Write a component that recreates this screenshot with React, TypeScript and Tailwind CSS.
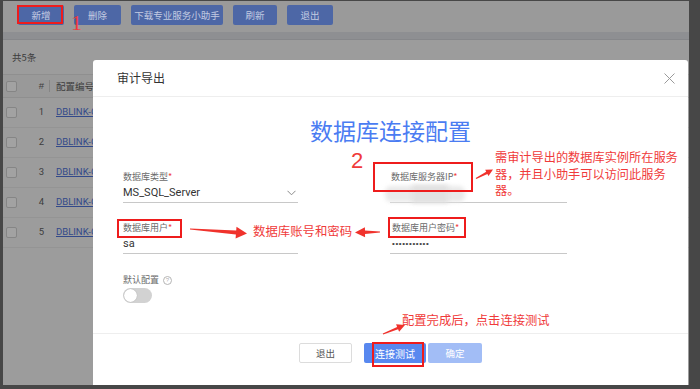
import React from "react";

function arrowPts(x1: number, y1: number, x2: number, y2: number, hl: number, hw: number, sw: number) {
  const dx = x2 - x1;
  const dy = y2 - y1;
  const len = Math.hypot(dx, dy);
  const ux = dx / len;
  const uy = dy / len;
  const nx = -uy;
  const ny = ux;
  const bx = x2 - ux * hl;
  const by = y2 - uy * hl;
  const p = (x: number, y: number) => `${x.toFixed(1)},${y.toFixed(1)}`;
  return [
    p(x1 + nx * 0.6, y1 + ny * 0.6),
    p(bx + (nx * sw) / 2, by + (ny * sw) / 2),
    p(bx + (nx * hw) / 2, by + (ny * hw) / 2),
    p(x2, y2),
    p(bx - (nx * hw) / 2, by - (ny * hw) / 2),
    p(bx - (nx * sw) / 2, by - (ny * sw) / 2),
    p(x1 - nx * 0.6, y1 - ny * 0.6),
  ].join(" ");
}

const RED = "#f0322c";

export default function App() {
  const rows = [1, 2, 3, 4, 5];
  return (
    <div lang="zh-CN" className="w-[700px] h-[389px] bg-[#474747] pt-[1px] pl-[3px] pr-[11px] pb-[4px] overflow-hidden font-['Liberation_Sans','Noto_Sans_CJK_SC',sans-serif]">
      <div className="relative w-full h-full bg-[#9c9c9c] overflow-hidden">
        {/* toolbar */}
        <div className="h-[31px] flex items-start pt-[4px] pl-[15px] gap-[10px] bg-[#9a9a9a]">
          {[
            ["新增", "w-[46px]"],
            ["删除", "w-[47px]"],
            ["下载专业服务小助手", "w-[92px]"],
            ["刷新", "w-[44px]"],
            ["退出", "w-[46px]"],
          ].map(([t, w]) => (
            <div
              key={t}
              className={`${w} h-[20px] rounded-[2px] bg-[#4d67a6] text-[#c3cbe2] text-[9.5px] flex items-center justify-center font-['Noto_Sans_CJK_SC',sans-serif]`}
            >
              {t}
            </div>
          ))}
        </div>
        <div className="h-[8px] bg-[#8e8f92] border-b border-[#86878a]" />
        {/* content */}
        <div className="h-[34px] flex items-center pl-[9px] text-[9.5px] text-[#3d3d3d] font-['Noto_Sans_CJK_SC',sans-serif]">
          共5条
        </div>
        <div className="border-t border-[#8f8f8f]">
          <div className="h-[23px] flex items-center border-b border-[#8f8f8f] bg-[#999999] text-[9.5px] text-[#3d3d3d]">
            <div className="w-[31px] flex items-center pl-[3px]">
              <div className="w-[11px] h-[11px] rounded-[2px] border border-[#858585] bg-[#a2a2a2]" />
            </div>
            <div className="w-[15px] text-center">#</div>
            <div className="w-[1px] h-[12px] bg-[#858585] mr-[6px]" />
            <div className="font-['Noto_Sans_CJK_SC',sans-serif]">配置编号</div>
          </div>
          {rows.map((r) => (
            <div key={r} className="h-[30px] flex items-center border-b border-[#949494] text-[9.5px] text-[#3d3d3d]">
              <div className="w-[31px] flex items-center pl-[3px]">
                <div className="w-[11px] h-[11px] rounded-[2px] border border-[#858585] bg-[#a2a2a2]" />
              </div>
              <div className="w-[15px] text-center font-['Roboto',sans-serif]">{r}</div>
              <div className="w-[7px]" />
              <div className="text-[#33498a] underline font-['Roboto',sans-serif]">DBLINK-CONFIG-00{r}</div>
            </div>
          ))}
        </div>

        {/* modal */}
        <div className="absolute left-[90px] top-[59px] w-[595px] h-[340px] bg-white rounded-t-[3px] flex flex-col">
          <div className="h-[37px] shrink-0 flex items-center justify-between pl-[24px] pr-[13px] border-b border-[#eeeeee]">
            <div className="text-[12px] text-[#333333] font-['Noto_Sans_CJK_SC',sans-serif]">审计导出</div>
            <svg width="11" height="11" viewBox="0 0 11 11">
              <path d="M0.5 0.5 L10.5 10.5 M10.5 0.5 L0.5 10.5" stroke="#9a9a9a" strokeWidth="1" />
            </svg>
          </div>
          <div className="h-[237px] shrink-0 border-b border-[#eeeeee]">
            <div className="mt-[18px] h-[30px] leading-[30px] text-center text-[23px] text-[#4a7cf2] font-['Noto_Sans_CJK_SC',sans-serif]">
              数据库连接配置
            </div>
            <div className="mt-[25px] flex pl-[30px] gap-[92px]">
              {/* left column */}
              <div className="w-[175px] flex flex-col gap-[18px]">
                <div>
                  <div className="h-[14px] leading-[14px] text-[9px] text-[#6a6a6a] font-['Noto_Sans_CJK_SC',sans-serif]">
                    数据库类型<span className="text-[#f04040]">*</span>
                  </div>
                  <div className="h-[19px] flex items-center justify-between border-b border-[#c8c8c8] text-[11px] text-[#333333] font-['Roboto',sans-serif]">
                    <span>MS_SQL_Server</span>
                    <svg width="9" height="6" viewBox="0 0 9 6" className="mr-[2px]">
                      <path d="M0.5 0.8 L4.5 4.8 L8.5 0.8" fill="none" stroke="#8a8a8a" strokeWidth="1" />
                    </svg>
                  </div>
                </div>
                <div>
                  <div className="h-[14px] leading-[14px] text-[9px] text-[#6a6a6a] font-['Noto_Sans_CJK_SC',sans-serif]">
                    数据库用户<span className="text-[#f04040]">*</span>
                  </div>
                  <div className="h-[19px] flex items-center border-b border-[#c8c8c8] text-[11px] text-[#333333] font-['Roboto',sans-serif]">
                    sa
                  </div>
                </div>
                <div className="mt-[1px]">
                  <div className="h-[14px] leading-[14px] text-[9px] text-[#6a6a6a] flex items-center gap-[4px] font-['Noto_Sans_CJK_SC',sans-serif]">
                    <span>默认配置</span>
                    <span className="w-[9px] h-[9px] rounded-full border border-[#b5b5b5] text-[#b0b0b0] text-[6px] leading-[7px] flex items-center justify-center font-['Liberation_Sans',sans-serif]">
                      ?
                    </span>
                  </div>
                  <div className="mt-[1px] w-[29px] h-[15px] rounded-full bg-[#d2d2d2] flex items-center pl-[1px]">
                    <div className="w-[13px] h-[13px] rounded-full bg-white shadow-[0_0_1px_rgba(0,0,0,0.3)]" />
                  </div>
                </div>
              </div>
              {/* right column */}
              <div className="w-[177px] flex flex-col gap-[18px]">
                <div className="relative">
                  <div className="h-[14px] leading-[14px] text-[9px] text-[#6a6a6a] pl-[1px] font-['Noto_Sans_CJK_SC',sans-serif]">
                    数据库服务器IP<span className="text-[#f04040]">*</span>
                  </div>
                  <div className="h-[19px] border-b border-[#c8c8c8]" />
                  <div className="absolute left-[-5px] top-[16px] w-[80px] h-[16px] rounded-[6px] bg-[#e9e9e9] blur-[2px]" />
                  <div className="absolute left-[22px] top-[15px] w-[36px] h-[18px] bg-[#e1e1e1] blur-[2px]" />
                </div>
                <div>
                  <div className="h-[14px] leading-[14px] text-[9px] text-[#6a6a6a] pl-[2px] font-['Noto_Sans_CJK_SC',sans-serif]">
                    数据库用户密码<span className="text-[#f04040]">*</span>
                  </div>
                  <div className="h-[19px] flex items-center border-b border-[#c8c8c8] text-[8px] text-[#444444] pl-[2px] tracking-[0.6px] font-['Liberation_Sans',sans-serif]">
                    •••••••••••
                  </div>
                </div>
              </div>
            </div>
          </div>
          <div className="pt-[9px] flex justify-center text-[9.5px] font-['Noto_Sans_CJK_SC',sans-serif]">
            <div className="w-[53px] h-[20px] border border-[#dcdcdc] rounded-[2px] flex items-center justify-center text-[#555555]">
              退出
            </div>
            <div className="ml-[12px] w-[62px] h-[20px] rounded-[2px] bg-[#5888ef] text-white flex items-center justify-center text-[10px]">
              连接测试
            </div>
            <div className="ml-[2px] w-[54px] h-[20px] rounded-[2px] bg-[#a2bdf6] text-white flex items-center justify-center">
              确定
            </div>
          </div>
        </div>

        {/* annotations */}
        <div className="absolute left-[14px] top-[4px] w-[46px] h-[19px] border-2 border-[#ee1c1c]" />
        <div className="absolute left-[114px] top-[218px] w-[65px] h-[19px] border-2 border-[#ee1c1c]" />
        <div className="absolute left-[370px] top-[161px] w-[100px] h-[30px] border-2 border-[#ee1c1c]" />
        <div className="absolute left-[385px] top-[216px] w-[78px] h-[21px] border-2 border-[#ee1c1c]" />
        <div className="absolute left-[369px] top-[341px] w-[52px] h-[25px] border-2 border-[#ee1c1c]" />

        <div className="absolute left-[68px] top-[9px] text-[22px] leading-[26px] text-[#f03a3a] font-['Liberation_Serif',serif]">1</div>
        <div className="absolute left-[348px] top-[147px] text-[22px] leading-[26px] text-[#f03a3a] font-['Liberation_Sans',sans-serif]">2</div>

        <div className="absolute left-[492px] top-[148px] w-[190px] flex flex-col text-[12.2px] leading-[16.5px] text-[#f03a3a] font-['Noto_Sans_CJK_SC',sans-serif]">
          <div className="whitespace-nowrap">需审计导出的数据库实例所在服务</div>
          <div className="whitespace-nowrap">器，并且小助手可以访问此服务</div>
          <div className="whitespace-nowrap">器。</div>
        </div>
        <div className="absolute left-[250px] top-[221px] text-[12.4px] leading-[18px] text-[#f03a3a] whitespace-nowrap font-['Noto_Sans_CJK_SC',sans-serif]">
          数据库账号和密码
        </div>
        <div className="absolute left-[399px] top-[310px] text-[12.3px] leading-[18px] text-[#f03a3a] whitespace-nowrap font-['Noto_Sans_CJK_SC',sans-serif]">
          配置完成后，点击连接测试
        </div>

        <svg className="absolute left-0 top-0 pointer-events-none" width="686" height="384" viewBox="0 0 686 384">
          <polygon points={arrowPts(187, 228, 244, 232.5, 11, 12, 4)} fill={RED} />
          <polygon points={arrowPts(377, 231, 352, 231.5, 10, 10, 3.5)} fill={RED} />
          <polygon points={arrowPts(473, 177.5, 490, 168.5, 7, 7, 2.5)} fill={RED} />
          <polygon points={arrowPts(380, 333, 402, 324, 8, 8, 2.5)} fill={RED} />
        </svg>
      </div>
    </div>
  );
}
